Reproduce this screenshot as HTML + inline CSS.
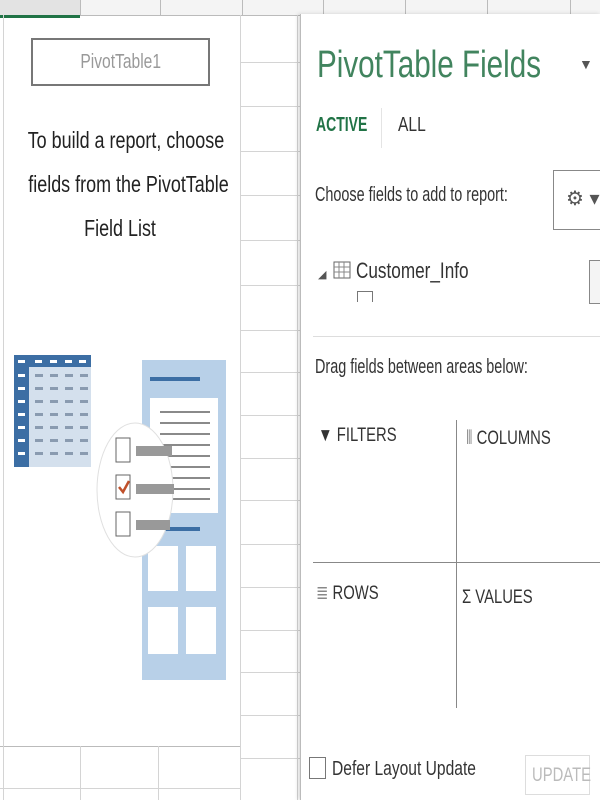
<!DOCTYPE html>
<html><head><meta charset="utf-8"><style>
body{margin:0;width:600px;height:800px;overflow:hidden;background:#fff;font-family:"Liberation Sans",sans-serif;position:relative}
.a{position:absolute}
.n{display:inline-block;transform:scaleX(.78);transform-origin:left center;white-space:nowrap}
.hl{position:absolute;height:1px;background:#d4d4d4}
.vl{position:absolute;width:1px;background:#d4d4d4}
</style></head><body>
<div class="a" style="left:0;top:0;width:600px;height:15px;background:#f4f4f4;border-bottom:1px solid #bbb"></div>
<div class="a" style="left:0;top:0;width:80px;height:15px;background:#e3e3e3;border-bottom:3px solid #217346"></div>
<div class="vl" style="left:80px;top:0;height:15px;background:#bbb"></div>
<div class="vl" style="left:160px;top:0;height:15px;background:#bbb"></div>
<div class="vl" style="left:242px;top:0;height:15px;background:#bbb"></div>
<div class="vl" style="left:323px;top:0;height:15px;background:#bbb"></div>
<div class="vl" style="left:405px;top:0;height:15px;background:#bbb"></div>
<div class="vl" style="left:487px;top:0;height:15px;background:#bbb"></div>
<div class="vl" style="left:570px;top:0;height:15px;background:#bbb"></div>
<div class="vl" style="left:240px;top:15px;height:785px"></div>
<div class="vl" style="left:297px;top:15px;height:785px"></div>
<div class="hl" style="left:240px;top:62px;width:60px"></div>
<div class="hl" style="left:240px;top:106px;width:60px"></div>
<div class="hl" style="left:240px;top:151px;width:60px"></div>
<div class="hl" style="left:240px;top:195px;width:60px"></div>
<div class="hl" style="left:240px;top:240px;width:60px"></div>
<div class="hl" style="left:240px;top:285px;width:60px"></div>
<div class="hl" style="left:240px;top:330px;width:60px"></div>
<div class="hl" style="left:240px;top:372px;width:60px"></div>
<div class="hl" style="left:240px;top:415px;width:60px"></div>
<div class="hl" style="left:240px;top:458px;width:60px"></div>
<div class="hl" style="left:240px;top:500px;width:60px"></div>
<div class="hl" style="left:240px;top:544px;width:60px"></div>
<div class="hl" style="left:240px;top:587px;width:60px"></div>
<div class="hl" style="left:240px;top:630px;width:60px"></div>
<div class="hl" style="left:240px;top:672px;width:60px"></div>
<div class="hl" style="left:240px;top:715px;width:60px"></div>
<div class="hl" style="left:240px;top:758px;width:60px"></div>
<div class="hl" style="left:0;top:746px;width:240px;background:#bbb"></div>
<div class="hl" style="left:0;top:788px;width:240px"></div>
<div class="vl" style="left:80px;top:746px;height:54px"></div>
<div class="vl" style="left:158px;top:746px;height:54px"></div>
<div class="vl" style="left:3px;top:15px;height:785px"></div>
<div class="a" style="left:31px;top:38px;width:179px;height:48px;border:2px solid #777;box-sizing:border-box;text-align:center;line-height:44px;color:#999;font-size:20px"><span class="n" style="transform-origin:center">PivotTable1</span></div>
<div class="a" style="left:0;top:118px;width:240px;text-align:center;font-size:23px;line-height:44px;color:#222"><span class="n" style="transform-origin:center">To build a report, choose</span><br><span class="n" style="transform-origin:center">fields from the PivotTable</span><br><span class="n" style="transform-origin:center">Field List</span></div>
<svg class="a" style="left:0;top:340px" width="240" height="350">
<rect x="14" y="15" width="77" height="12" fill="#3c6ea4"/>
<rect x="14" y="15" width="15" height="112" fill="#3c6ea4"/>
<rect x="29" y="27" width="62" height="100" fill="#d4e0ed"/>
<g fill="#fff"><rect x="18" y="20" width="7" height="3"/><rect x="35" y="20" width="7" height="3"/><rect x="50" y="20" width="7" height="3"/><rect x="65" y="20" width="7" height="3"/><rect x="79" y="20" width="7" height="3"/></g>
<g fill="#fff"><rect x="18" y="34" width="7" height="3"/><rect x="18" y="47" width="7" height="3"/><rect x="18" y="60" width="7" height="3"/><rect x="18" y="73" width="7" height="3"/><rect x="18" y="86" width="7" height="3"/><rect x="18" y="99" width="7" height="3"/><rect x="18" y="112" width="7" height="3"/></g>
<g stroke="#8a9bb0" stroke-width="3" stroke-dasharray="8 7"><path d="M35 35.5H91M35 48.5H91M35 61.5H91M35 74.5H91M35 87.5H91M35 100.5H91M35 113.5H91"/></g>
<rect x="142" y="20" width="84" height="320" fill="#b8d0e8"/>
<rect x="150" y="37" width="50" height="4" fill="#3c6ea4"/>
<rect x="150" y="58" width="68" height="115" fill="#fff"/>
<g fill="#8a8a8a"><rect x="160" y="71" width="50" height="2"/><rect x="160" y="82" width="50" height="2"/><rect x="160" y="93" width="50" height="2"/><rect x="160" y="104" width="50" height="2"/><rect x="160" y="115" width="50" height="2"/><rect x="160" y="126" width="50" height="2"/><rect x="160" y="137" width="50" height="2"/><rect x="160" y="148" width="50" height="2"/><rect x="160" y="158" width="50" height="2"/></g>
<rect x="165" y="187" width="35" height="4" fill="#3c6ea4"/>
<rect x="148" y="206" width="30" height="45" fill="#fff"/><rect x="186" y="206" width="30" height="45" fill="#fff"/>
<rect x="148" y="267" width="30" height="47" fill="#fff"/><rect x="186" y="267" width="30" height="47" fill="#fff"/>
<ellipse cx="135" cy="150" rx="38" ry="67" fill="#fff" stroke="#e0e0e0"/>
<rect x="116" y="98" width="14" height="24" fill="#fff" stroke="#666"/><rect x="136" y="106" width="36" height="10" fill="#999"/>
<rect x="116" y="135" width="14" height="24" fill="#fff" stroke="#666"/><path d="M119 147l4 5 6-11" stroke="#c0502a" stroke-width="2.5" fill="none"/><rect x="136" y="144" width="38" height="10" fill="#999"/>
<rect x="116" y="172" width="14" height="24" fill="#fff" stroke="#666"/><rect x="136" y="180" width="34" height="10" fill="#999"/>
</svg>
<div class="a" style="left:300px;top:14px;width:300px;height:786px;background:#fff;border-left:1px solid #bbb;box-shadow:-2px 0 4px rgba(0,0,0,.15)"></div>
<div class="a" style="left:317px;top:44px;font-size:38px;color:#41845e"><span class="n">PivotTable Fields</span></div>
<div class="a" style="left:579px;top:56px;font-size:14px;color:#555">▼</div>
<div class="a" style="left:316px;top:114px;font-size:20px;color:#217346;font-weight:bold"><span class="n" style="transform:scaleX(.7)">ACTIVE</span></div>
<div class="vl" style="left:381px;top:108px;height:40px;background:#e4e4e4"></div>
<div class="a" style="left:398px;top:114px;font-size:20px;color:#333"><span class="n">ALL</span></div>
<div class="a" style="left:315px;top:184px;font-size:20px;color:#333"><span class="n" style="transform:scaleX(.72)">Choose fields to add to report:</span></div>
<div class="a" style="left:553px;top:170px;width:60px;height:58px;border:1px solid #888;font-size:20px;color:#555;line-height:56px;padding-left:12px">⚙ ▾</div>
<div class="a" style="left:318px;top:268px;font-size:11px;color:#555">◢</div>
<svg class="a" style="left:333px;top:260px" width="20" height="20"><rect x="1" y="2" width="16" height="16" fill="#fff" stroke="#666"/><path d="M1 7H17M1 12H17M6 2V18M11 2V18" stroke="#888"/></svg>
<div class="a" style="left:356px;top:258px;font-size:22px;color:#333"><span class="n">Customer_Info</span></div>
<div class="a" style="left:357px;top:291px;width:14px;height:10px;border:1px solid #777;border-bottom:none"></div>
<div class="a" style="left:589px;top:260px;width:11px;height:42px;border:1px solid #888;background:#f4f4f4"></div>
<div class="hl" style="left:313px;top:336px;width:287px;background:#ddd"></div>
<div class="a" style="left:315px;top:356px;font-size:20px;color:#333"><span class="n" style="transform:scaleX(.72)">Drag fields between areas below:</span></div>
<div class="vl" style="left:456px;top:420px;height:288px;background:#888"></div>
<div class="hl" style="left:313px;top:562px;width:287px;background:#888"></div>
<div class="a" style="left:318px;top:425px;font-size:19px;color:#333"><span class="n">▼ FILTERS</span></div>
<div class="a" style="left:466px;top:428px;font-size:19px;color:#333"><span class="n"><span style="color:#888">⦀</span> COLUMNS</span></div>
<div class="a" style="left:316px;top:582px;font-size:19px;color:#333"><span class="n"><span style="color:#888">≣</span> ROWS</span></div>
<div class="a" style="left:462px;top:587px;font-size:19px;color:#333"><span class="n">Σ VALUES</span></div>
<div class="a" style="left:309px;top:757px;width:15px;height:20px;border:1px solid #777"></div>
<div class="a" style="left:332px;top:758px;font-size:20px;color:#333"><span class="n">Defer Layout Update</span></div>
<div class="a" style="left:525px;top:755px;width:65px;height:40px;border:1px solid #ddd;color:#bbb;font-size:19px;line-height:40px;padding-left:6px;box-sizing:border-box"><span class="n">UPDATE</span></div>
</body></html>
